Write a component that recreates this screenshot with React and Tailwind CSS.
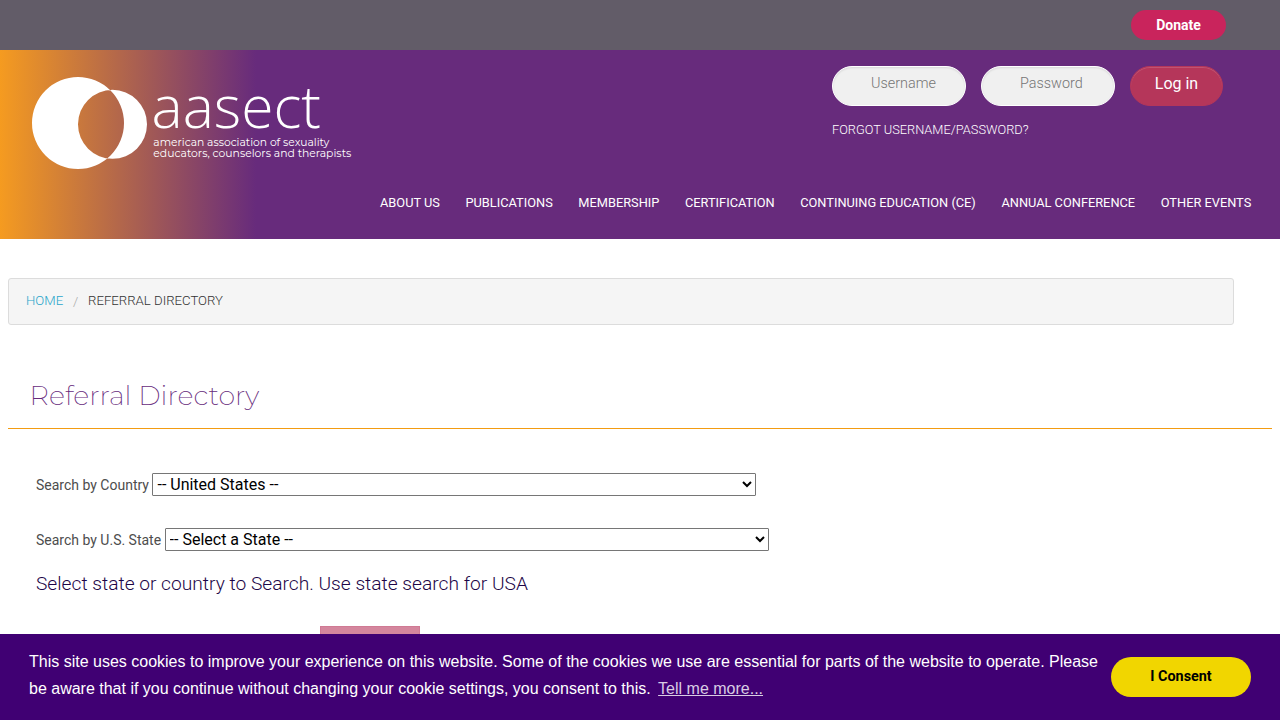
import React from 'react';

const navLinks = [
  'About Us',
  'Publications',
  'Membership',
  'Certification',
  'Continuing Education (CE)',
  'Annual Conference',
  'Other Events',
];

const Logo = () => (
  <svg className="block overflow-visible" width="322" height="94" viewBox="0 0 322 94" fill="white">
    {/* two overlapping discs, the overlap stays open */}
    <path
      fillRule="evenodd"
      d="M0 47a46 46 0 1 0 92 0a46 46 0 1 0 -92 0zM46 48.3a34.5 34.5 0 1 0 69 0a34.5 34.5 0 1 0 -69 0z"
    />
    <text
      x="119.5"
      y="51.5"
      fontSize="59"
      textLength="169.5"
      lengthAdjust="spacingAndGlyphs"
      className="font-['Open_Sans'] font-light"
    >
      aasect
    </text>
    <text x="121.3" y="69.5" fontSize="11.5" textLength="176" lengthAdjust="spacingAndGlyphs" className="font-['Montserrat','Lato']">
      american association of sexuality
    </text>
    <text x="121.3" y="81" fontSize="11.5" textLength="198" lengthAdjust="spacingAndGlyphs" className="font-['Montserrat','Lato']">
      educators, counselors and therapists
    </text>
  </svg>
);

const Header = () => (
  <header className="h-[189px] bg-[linear-gradient(to_right,#f59b20_0%,#672b7c_20%)]">
    <div className="flex h-[136px] justify-between pl-8 pr-[57px]">
      <div className="pt-[26px]">
        <Logo />
      </div>
      <form className="w-[391px] pt-4">
        <div className="flex gap-[15px]">
          <input
            type="text"
            placeholder="Username"
            className="h-10 w-[134px] rounded-full border border-white bg-[#f0f0f0] pl-[38px] pb-[6px] text-[14.4px] font-light shadow-[inset_0_1px_2px_rgba(0,0,0,0.1)] placeholder:text-[#757575]"
          />
          <input
            type="password"
            placeholder="Password"
            className="h-10 w-[134px] rounded-full border border-white bg-[#f0f0f0] pl-[38px] pb-[6px] text-[14.4px] font-light shadow-[inset_0_1px_2px_rgba(0,0,0,0.1)] placeholder:text-[#757575]"
          />
          <button
            type="button"
            className="h-10 w-[93px] rounded-full border border-[#b5365a] bg-[#b5365a] pb-1 text-base text-white shadow-[inset_0_1px_0_rgba(255,255,255,0.15)]"
          >
            Log in
          </button>
        </div>
        <a href="#" className="mt-[14px] block text-[12.8px] leading-5 font-light text-white uppercase">
          Forgot Username/Password?
        </a>
      </form>
    </div>
    <nav className="flex justify-between pt-[7px] pr-[28.7px] pl-[380px]">
      {navLinks.map((link) => (
        <a key={link} href="#" className="text-[12.8px] leading-5 whitespace-nowrap text-white uppercase">
          {link}
        </a>
      ))}
    </nav>
  </header>
);

const CookieBar = () => (
  <div className="fixed inset-x-0 bottom-0 flex h-[86px] items-center bg-[#400073] pr-[29px] pl-[29px] font-['Liberation_Sans',sans-serif]">
    <p className="w-[1082px] pb-1 text-base leading-[27px] text-white">
      This site uses cookies to improve your experience on this website. Some of the cookies we use are essential for
      parts of the website to operate. Please be aware that if you continue without changing your cookie settings, you
      consent to this.
      <a href="#" className="ml-[7.4px] text-[#d9cce3] underline">Tell me more...</a>
    </p>
    <button type="button" className="h-10 w-[140px] rounded-full bg-[#f1d600] font-['Roboto',sans-serif] text-[14.4px] font-bold text-black">
      I Consent
    </button>
  </div>
);

const App = () => {
  return (
    <div className="h-[720px] overflow-hidden bg-white font-['Roboto',sans-serif]">
      <div className="flex h-[50px] items-start justify-end bg-[#625c68] pt-[10px] pr-[54px]">
        <button type="button" className="h-[30px] w-[95px] rounded-full bg-[#c9245c] text-sm font-bold text-white">
          Donate
        </button>
      </div>
      <Header />

      <main className="px-2 pt-[39px]">
        <ul className="flex h-[47px] w-[1226px] items-center rounded-[3px] border border-[#dcdcdc] bg-[#f5f5f5] pb-[2px] pl-[17px] text-[13.2px] font-light uppercase">
          <li><a href="#" className="text-[#2ba6cb]">Home</a></li>
          <li className="mx-[9.8px] pt-[2px] text-[#aaaaaa]">/</li>
          <li className="text-[#333333]">Referral Directory</li>
        </ul>

        <h1 className="mt-[50px] h-[54px] border-b border-[#f39c12] pl-[21.6px] font-['Montserrat','Lato',sans-serif] text-[27px] leading-[42px] font-extralight text-[#672b7c]">
          Referral Directory
        </h1>

        <div className="pt-11 pl-7">
          <div className="flex items-center gap-[3.47px]">
            <label htmlFor="country" className="text-sm text-[#4d4d4d]">Search by Country</label>
            <select id="country" className="h-[23px] w-[604px] rounded-[1px] border border-[#767676] text-base leading-5 text-black">
              <option>-- United States --</option>
            </select>
          </div>
          <div className="mt-8 flex items-center gap-[3.47px]">
            <label htmlFor="state" className="text-sm text-[#4d4d4d]">Search by U.S. State</label>
            <select id="state" className="h-[23px] w-[604px] rounded-[1px] border border-[#767676] text-base leading-5 text-black">
              <option>-- Select a State --</option>
            </select>
          </div>
          <p className="mt-[18px] text-[19.2px] leading-[30px] font-light text-[#1d0647]">
            Select state or country to Search. Use state search for USA
          </p>
          <button
            type="button"
            aria-label="Search"
            className="mt-[27px] ml-[284px] block h-10 w-[100px] border border-[#d07a94] bg-[#d4869d]"
          />
        </div>
      </main>

      <CookieBar />
    </div>
  );
};

export default App;
